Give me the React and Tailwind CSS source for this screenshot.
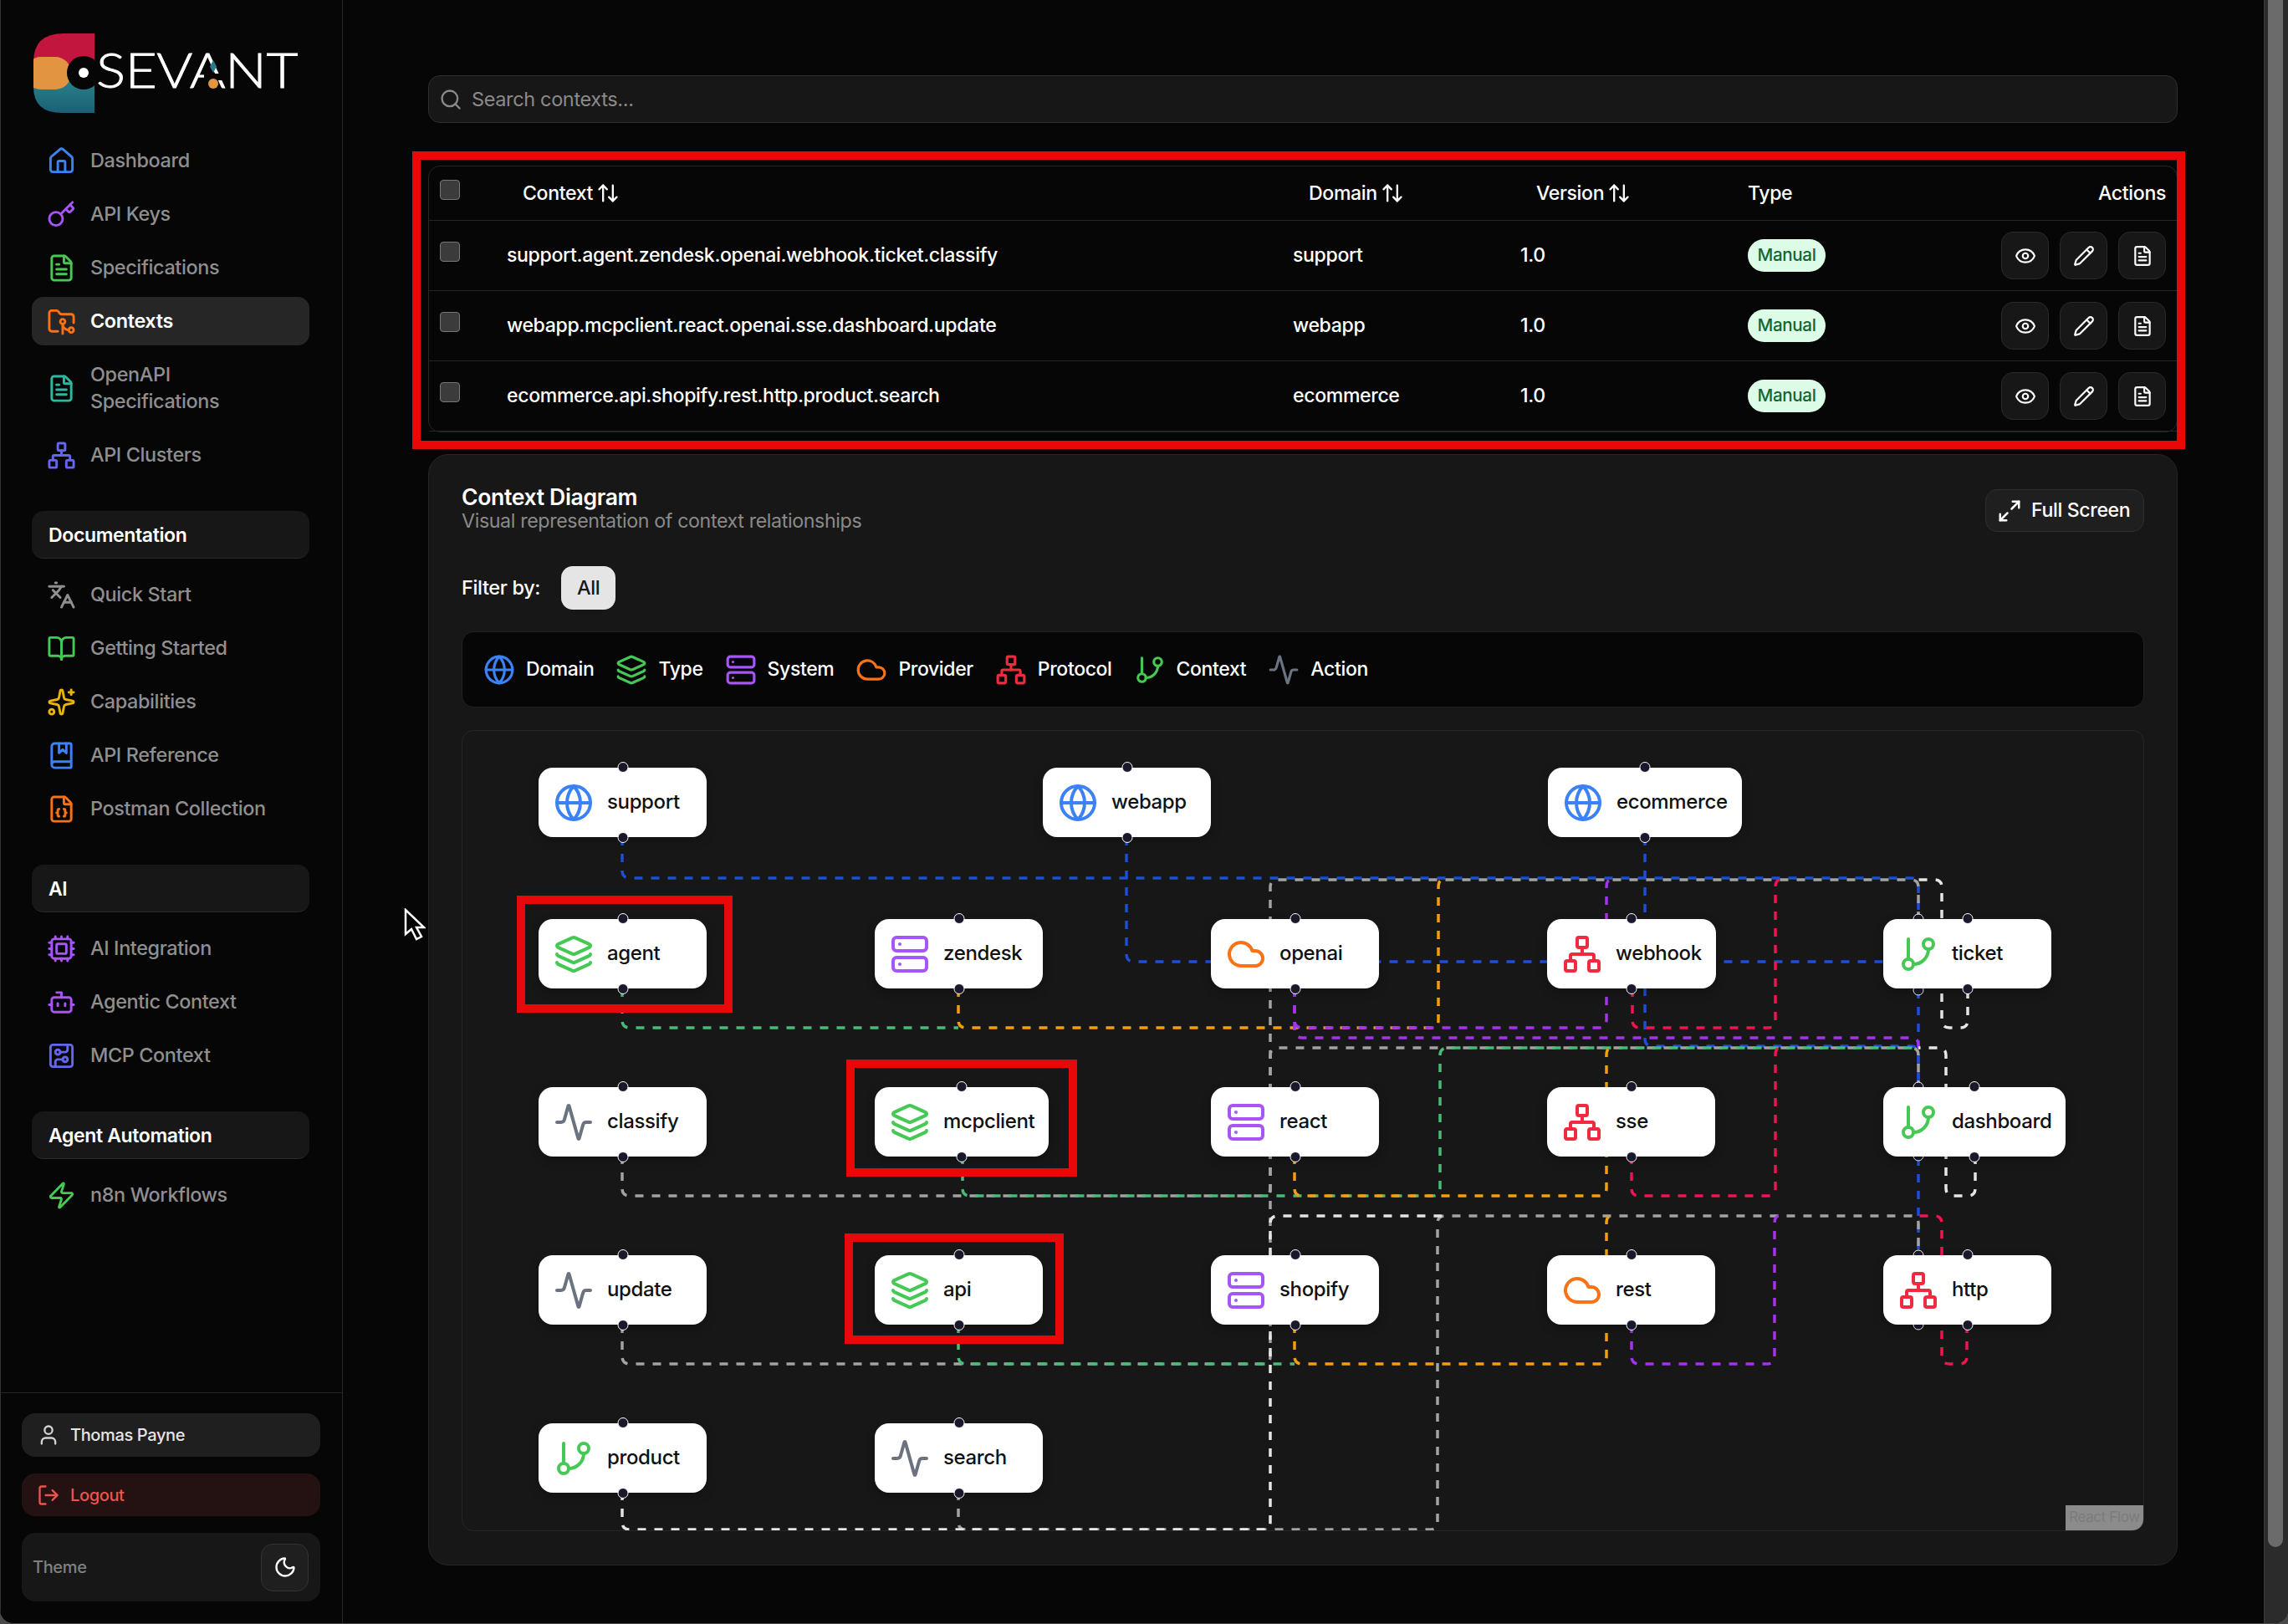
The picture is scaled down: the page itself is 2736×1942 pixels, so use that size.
import {
  Activity,
  ArrowUpDown,
  BookMarked,
  BookOpen,
  Bot,
  CircuitBoard,
  Cloud,
  Cpu,
  Eye,
  FileJson,
  FileText,
  FolderGit2,
  GitBranch,
  Globe,
  House,
  Key,
  Languages,
  Layers,
  LogOut,
  Maximize2,
  Moon,
  Network,
  Pencil,
  Search,
  Server,
  Sparkles,
  User,
  Zap,
} from 'lucide-react'

const mainNav = [
  { label: 'Dashboard', icon: House, color: 'text-[#3b82f6]' },
  { label: 'API Keys', icon: Key, color: 'text-[#a855f7]' },
  { label: 'Specifications', icon: FileText, color: 'text-[#46c954]' },
  { label: 'Contexts', icon: FolderGit2, color: 'text-[#f97316]', active: true },
  { label: 'OpenAPI Specifications', icon: FileText, color: 'text-[#2fb8a0]', wrap: true },
  { label: 'API Clusters', icon: Network, color: 'text-[#6366f1]' },
]

const sections = [
  {
    title: 'Documentation',
    items: [
      { label: 'Quick Start', icon: Languages, color: 'text-[#8f8f8f]' },
      { label: 'Getting Started', icon: BookOpen, color: 'text-[#46c954]' },
      { label: 'Capabilities', icon: Sparkles, color: 'text-[#eab308]' },
      { label: 'API Reference', icon: BookMarked, color: 'text-[#3b82f6]' },
      { label: 'Postman Collection', icon: FileJson, color: 'text-[#f97316]' },
    ],
  },
  {
    title: 'AI',
    items: [
      { label: 'AI Integration', icon: Cpu, color: 'text-[#a855f7]' },
      { label: 'Agentic Context', icon: Bot, color: 'text-[#a855f7]' },
      { label: 'MCP Context', icon: CircuitBoard, color: 'text-[#6366f1]' },
    ],
  },
  {
    title: 'Agent Automation',
    items: [{ label: 'n8n Workflows', icon: Zap, color: 'text-[#46c954]' }],
  },
]

const rows = [
  { name: 'support.agent.zendesk.openai.webhook.ticket.classify', domain: 'support' },
  { name: 'webapp.mcpclient.react.openai.sse.dashboard.update', domain: 'webapp' },
  { name: 'ecommerce.api.shopify.rest.http.product.search', domain: 'ecommerce' },
]

const kinds = {
  domain: { icon: Globe, color: 'text-[#3b82f6]', label: 'Domain' },
  type: { icon: Layers, color: 'text-[#46c954]', label: 'Type' },
  system: { icon: Server, color: 'text-[#a855f7]', label: 'System' },
  provider: { icon: Cloud, color: 'text-[#f97316]', label: 'Provider' },
  protocol: { icon: Network, color: 'text-[#ef2b3f]', label: 'Protocol' },
  context: { icon: GitBranch, color: 'text-[#46c954]', label: 'Context' },
  action: { icon: Activity, color: 'text-[#6b7280]', label: 'Action' },
}

// canvas nodes, page coordinates of the top left corner
const nodes = [
  { label: 'support', kind: 'domain', x: 643, y: 918 },
  { label: 'webapp', kind: 'domain', x: 1246, y: 918 },
  { label: 'ecommerce', kind: 'domain', x: 1850, y: 918 },
  { label: 'agent', kind: 'type', x: 643, y: 1099 },
  { label: 'zendesk', kind: 'system', x: 1045, y: 1099 },
  { label: 'openai', kind: 'provider', x: 1447, y: 1099 },
  { label: 'webhook', kind: 'protocol', x: 1849, y: 1099 },
  { label: 'ticket', kind: 'context', x: 2251, y: 1099 },
  { label: 'classify', kind: 'action', x: 643, y: 1300 },
  { label: 'mcpclient', kind: 'type', x: 1045, y: 1300 },
  { label: 'react', kind: 'system', x: 1447, y: 1300 },
  { label: 'sse', kind: 'protocol', x: 1849, y: 1300 },
  { label: 'dashboard', kind: 'context', x: 2251, y: 1300 },
  { label: 'update', kind: 'action', x: 643, y: 1501 },
  { label: 'api', kind: 'type', x: 1045, y: 1501 },
  { label: 'shopify', kind: 'system', x: 1447, y: 1501 },
  { label: 'rest', kind: 'provider', x: 1849, y: 1501 },
  { label: 'http', kind: 'protocol', x: 2251, y: 1501 },
  { label: 'product', kind: 'context', x: 643, y: 1702 },
  { label: 'search', kind: 'action', x: 1045, y: 1702 },
]

const BLUE = '#1d4ed8'
const GRAY = '#a3a3a3'
const GREEN = '#48bb78'
const ORANGE = '#f59e0b'
const PURPLE = '#a333ee'
const PINK = '#f01450'
const WHITE = '#e5e5e5'

// order matters, later edges sit on top
const edges = [
  [BLUE, [[743, 1001], [743, 1050], [2293, 1050], [2293, 1099]]],
  [BLUE, [[1346, 1001], [1346, 1150], [2260, 1150]]],
  [BLUE, [[1966, 1001], [1966, 1251], [2293, 1251], [2293, 1300]]],
  [BLUE, [[2293, 1184], [2293, 1501]]],
  [GRAY, [[743, 1382], [743, 1430], [1518, 1430], [1518, 1052], [2293, 1052], [2293, 1099]]],
  [GRAY, [[743, 1584], [743, 1631], [1518, 1631], [1518, 1253], [2293, 1253], [2293, 1300]]],
  [GRAY, [[1145, 1784], [1145, 1829], [1718, 1829], [1718, 1454], [2293, 1454], [2293, 1501]]],
  [GREEN, [[743, 1182], [743, 1229], [1145, 1229]]],
  [GREEN, [[1150, 1382], [1150, 1430], [1721, 1430], [1721, 1253], [2293, 1253]]],
  [GREEN, [[1145, 1584], [1145, 1631], [1547, 1631]]],
  [ORANGE, [[1145, 1182], [1145, 1229], [1719, 1229], [1719, 1052], [1731, 1052]]],
  [ORANGE, [[1547, 1382], [1547, 1430], [1920, 1430], [1920, 1253], [1932, 1253]]],
  [ORANGE, [[1547, 1584], [1547, 1631], [1920, 1631], [1920, 1454], [1932, 1454]]],
  [PURPLE, [[1547, 1182], [1547, 1229], [1920, 1229], [1920, 1052], [1932, 1052]]],
  [PURPLE, [[1547, 1182], [1547, 1241], [2293, 1241], [2293, 1257]]],
  [PURPLE, [[1950, 1584], [1950, 1631], [2121, 1631], [2121, 1454], [2133, 1454]]],
  [PINK, [[1951, 1182], [1951, 1229], [2122, 1229], [2122, 1052], [2134, 1052]]],
  [PINK, [[1950, 1382], [1950, 1430], [2122, 1430], [2122, 1253], [2134, 1253]]],
  [PINK, [[2351, 1584], [2351, 1631], [2321, 1631], [2321, 1454], [2293, 1454]]],
  [WHITE, [[2352, 1184], [2352, 1229], [2321, 1229], [2321, 1052], [2293, 1052]]],
  [WHITE, [[2361, 1382], [2361, 1430], [2326, 1430], [2326, 1253], [2293, 1253]]],
  [WHITE, [[743, 1784], [743, 1829], [1518, 1829], [1518, 1454], [1723, 1454]]],
]

const hiddenHandles = [1099, 1184, 1300, 1382, 1501, 1584]

const callouts = [
  { x: 618, y: 1070, w: 258, h: 140 },
  { x: 1012, y: 1266, w: 276, h: 140 },
  { x: 1010, y: 1474, w: 262, h: 132 },
]

// smoothstep style path with rounded corners
function toPath(pts, r = 9) {
  let d = `M${pts[0][0]} ${pts[0][1]}`
  for (let i = 1; i < pts.length - 1; i++) {
    const [px, py] = pts[i - 1]
    const [x, y] = pts[i]
    const [nx, ny] = pts[i + 1]
    const inLen = Math.min(r, Math.hypot(x - px, y - py) / 2)
    const outLen = Math.min(r, Math.hypot(nx - x, ny - y) / 2)
    const ax = x - Math.sign(x - px) * inLen
    const ay = y - Math.sign(y - py) * inLen
    const bx = x + Math.sign(nx - x) * outLen
    const by = y + Math.sign(ny - y) * outLen
    d += ` L${ax} ${ay} Q${x} ${y} ${bx} ${by}`
  }
  const last = pts[pts.length - 1]
  return `${d} L${last[0]} ${last[1]}`
}

function Logo() {
  return (
    <svg width="320" height="95" viewBox="40 40 320 95" className="block">
      <defs>
        <linearGradient id="logoTeal" x1="0" y1="0" x2="0" y2="1">
          <stop offset="0" stopColor="#2c8a8c" />
          <stop offset="1" stopColor="#1b5f78" />
        </linearGradient>
        <clipPath id="logoShape">
          <path d="M113 40H76Q40 40 40 74V104Q40 135 74 135H113Z" />
        </clipPath>
      </defs>
      <g clipPath="url(#logoShape)">
        <rect x="40" y="40" width="73" height="40" fill="#c2163f" />
        <rect x="40" y="85" width="73" height="50" fill="url(#logoTeal)" />
        <rect x="30" y="68" width="55" height="39" rx="19" fill="#e39440" />
      </g>
      <circle cx="100" cy="87" r="20" fill="#060606" />
      <circle cx="100" cy="87" r="6" fill="#ffffff" />
      <text
        x="115"
        y="105"
        textLength="241"
        lengthAdjust="spacingAndGlyphs"
        fill="#ffffff"
        stroke="#ffffff"
        strokeWidth="0.8"
        fontFamily="Lato, sans-serif"
        fontWeight="300"
        fontSize="58"
      >
        SEVANT
      </text>
      <rect x="244" y="88" width="22" height="8" fill="#060606" />
      <circle cx="255" cy="100" r="6" fill="#e39440" />
      <path d="M255 72L259 79.5L255 87L251 79.5Z" fill="#2a7a8c" />
    </svg>
  )
}

function NavItem({ item }) {
  const Icon = item.icon
  return (
    <div
      className={`flex items-center gap-[17px] rounded-[14px] py-[13px] pl-[18px] pr-[20px] text-[23.4px] leading-[32px] ${
        item.active ? 'bg-[#262626] font-semibold text-white' : 'font-medium text-[#8f8f8f]'
      }`}
    >
      <Icon size={35} className={`my-[-2px] shrink-0 ${item.color}`} />
      <span className={item.wrap ? 'w-[170px]' : 'whitespace-nowrap'}>{item.label}</span>
    </div>
  )
}

function Sidebar() {
  return (
    <aside className="flex w-[410px] shrink-0 flex-col border-r border-[#262626] shadow-[inset_1px_0_0_#333333]">
      <div className="h-[163px] pl-[40px] pt-[40px]">
        <Logo />
      </div>
      <nav className="flex flex-col gap-[38px] pl-[38px] pr-[39px]">
        <div className="flex flex-col gap-[6px]">
          {mainNav.map((item) => (
            <NavItem key={item.label} item={item} />
          ))}
        </div>
        {sections.map((section) => (
          <div key={section.title} className="flex flex-col">
            <div className="mb-[14px] flex h-[57px] items-center rounded-[14px] border-b border-[#2a2a2a] bg-[#171717] pl-[20px] pt-[2px] text-[23px] font-semibold text-white">
              {section.title}
            </div>
            <div className="flex flex-col gap-[6px]">
              {section.items.map((item) => (
                <NavItem key={item.label} item={item} />
              ))}
            </div>
          </div>
        ))}
      </nav>
      <div className="mt-auto flex flex-col gap-[20px] border-t border-[#262626] px-[26px] pb-[26px] pt-[24px]">
        <div className="flex h-[52px] items-center gap-[12px] rounded-[16px] bg-[#1f1f1f] pl-[18px] text-[20px] font-medium text-[#e5e5e5]">
          <User size={28} className="text-[#d4d4d4]" />
          Thomas Payne
        </div>
        <div className="flex h-[51px] items-center gap-[12px] rounded-[16px] bg-[#241212] pl-[18px] text-[20px] font-medium text-[#ef5350]">
          <LogOut size={28} />
          Logout
        </div>
        <div className="flex h-[82px] items-center justify-between rounded-[16px] bg-[#171717] pl-[13px] pr-[14px] text-[20px] font-medium text-[#808080]">
          Theme
          <div className="flex size-[57px] items-center justify-center rounded-[14px] border border-[#333333] bg-[#1f1f1f]">
            <Moon size={28} className="text-white" />
          </div>
        </div>
      </div>
    </aside>
  )
}

function Checkbox() {
  return <div className="mb-[9px] size-[24px] rounded-[4px] border border-[#777777] bg-[#3b3b3b]" />
}

function SortHeader({ label }) {
  return (
    <div className="flex items-center gap-[4px] pl-[19px]">
      {label}
      <ArrowUpDown size={28} className="text-white" />
    </div>
  )
}

function IconButton({ icon: Icon }) {
  return (
    <div className="flex size-[57px] items-center justify-center rounded-[14px] border border-[#2a2a2a] bg-[#171717]">
      <Icon size={26} className="text-white" />
    </div>
  )
}

const tableCols = 'grid grid-cols-[80px_940px_272px_272px_1fr_auto] items-center pl-[13px] pr-[13px]'

function ContextsTable() {
  return (
    <div className="relative mt-[51px] rounded-[14px] border border-[#262626] text-[23.1px] font-medium text-white">
      <div className={`${tableCols} h-[65px] border-b border-[#262626]`}>
        <Checkbox />
        <SortHeader label="Context" />
        <SortHeader label="Domain" />
        <SortHeader label="Version" />
        <div>Type</div>
        <div className="text-right">Actions</div>
      </div>
      {rows.map((row) => (
        <div
          key={row.name}
          className={`${tableCols} h-[84px] border-b border-[#262626] last:h-[83px] last:border-b-0`}
        >
          <Checkbox />
          <div>{row.name}</div>
          <div>{row.domain}</div>
          <div>1.0</div>
          <div>
            <span className="inline-flex h-[39px] w-[93px] items-center justify-center rounded-full bg-[#dcfce7] text-[20.6px] text-[#166534]">
              Manual
            </span>
          </div>
          <div className="flex gap-[13px]">
            <IconButton icon={Eye} />
            <IconButton icon={Pencil} />
            <IconButton icon={FileText} />
          </div>
        </div>
      ))}
      <div className="pointer-events-none absolute -bottom-[21px] -left-[20px] -right-[10px] -top-[18px] border-[10px] border-[#e90808]" />
    </div>
  )
}

function DiagramNode({ node }) {
  const { icon: Icon, color } = kinds[node.kind]
  return (
    <div
      className="absolute flex h-[83px] min-w-[201px] items-center gap-[16px] rounded-[17px] bg-white pl-[18px] pr-[17px] text-[24px] font-medium text-[#111111] shadow-[0_4px_12px_rgba(0,0,0,0.25)]"
      style={{ left: node.x - 552, top: node.y - 874 }}
    >
      <Icon size={48} className={`shrink-0 ${color}`} />
      <span className="pb-[2px]">{node.label}</span>
      <span className="absolute -top-[7px] left-1/2 size-[13px] -translate-x-1/2 rounded-full border border-white bg-[#1a192b]" />
      <span className="absolute -bottom-[7px] left-1/2 size-[13px] -translate-x-1/2 rounded-full border border-white bg-[#1a192b]" />
    </div>
  )
}

function Canvas() {
  return (
    <div className="relative mt-[27px] h-[958px] overflow-hidden rounded-[14px] border border-[#262626]">
      <svg width="2010" height="956" viewBox="552 874 2010 956" fill="none" className="absolute left-0 top-0">
        {edges.map(([color, pts], i) => (
          <path key={i} d={toPath(pts)} stroke={color} strokeWidth="3.5" strokeDasharray="10 10" />
        ))}
        {hiddenHandles.map((y) => (
          <circle key={y} cx="2293" cy={y} r="6" fill="#1a192b" stroke="#ffffff" strokeWidth="1" />
        ))}
      </svg>
      {nodes.map((node) => (
        <DiagramNode key={node.label} node={node} />
      ))}
      {callouts.map((box) => (
        <div
          key={box.x}
          className="pointer-events-none absolute border-[10px] border-[#e90808]"
          style={{ left: box.x - 553, top: box.y - 873, width: box.w, height: box.h }}
        />
      ))}
      <div className="absolute bottom-0 right-0 flex h-[30px] w-[93px] items-center justify-center bg-[#8b8b8b] text-[17px] text-[#7c7c7c]">
        React Flow
      </div>
    </div>
  )
}

function DiagramCard() {
  return (
    <section className="mt-[26px] rounded-[24px] border border-[#262626] bg-[#171717] px-[39px] pb-[40px] pt-[35px]">
      <div className="flex items-start justify-between">
        <div>
          <h2 className="text-[26.6px] font-semibold leading-[31px] text-white">Context Diagram</h2>
          <p className="text-[23.2px] leading-[27px] text-[#8a8a8a]">Visual representation of context relationships</p>
        </div>
        <div className="mt-[6px] flex h-[51px] w-[190px] items-center gap-[11px] rounded-[14px] border border-[#2e2e2e] bg-[#1f1f1f] pl-[13px] text-[23.1px] font-medium text-white">
          <Maximize2 size={30} />
          Full Screen
        </div>
      </div>
      <div className="mt-[40px] flex items-center gap-[25px] text-[23.5px] font-medium">
        <span className="text-white">Filter by:</span>
        <span className="flex h-[52px] w-[65px] items-center justify-center rounded-[14px] bg-[#e5e5e5] text-[#171717]">
          All
        </span>
      </div>
      <div className="mt-[26px] flex h-[91px] items-center gap-[26px] rounded-[14px] border border-[#222222] bg-[#060606] pl-[25px] text-[23px] font-medium text-white">
        {Object.values(kinds).map(({ icon: Icon, color, label }) => (
          <div key={label} className="flex items-center gap-[13px]">
            <Icon size={38} className={color} />
            {label}
          </div>
        ))}
      </div>
      <Canvas />
    </section>
  )
}

export default function App() {
  return (
    <div className="h-[1942px] w-full overflow-hidden bg-[#4a4a4a] font-[Inter,sans-serif] tracking-[-0.0225em]">
      <div className="relative flex h-[1941px] overflow-hidden rounded-b-[16px] bg-[#060606]">
        <Sidebar />
        <main className="min-w-0 flex-1 pl-[102px] pr-[103px] pt-[90px]">
          <div className="flex h-[57px] items-center gap-[11px] rounded-[14px] border border-[#2e2e2e] bg-[#171717] pl-[12px] text-[23.5px] text-[#8a8a8a]">
            <Search size={28} />
            Search contexts...
          </div>
          <ContextsTable />
          <DiagramCard />
        </main>
        <div className="w-[29px] shrink-0 border-l border-[#3a3a3a] bg-[#2b2b2b] pl-[4px]">
          <div className="h-[1850px] w-[18px] rounded-b-full bg-[#6b6b6b]" />
        </div>
        <svg width="26" height="39" viewBox="0 0 26 39" className="absolute left-[483px] top-[1086px]">
          <path d="M2 2V31L9 25L15 37L21 34L15 23H24Z" fill="#000000" stroke="#ffffff" strokeWidth="2.5" />
        </svg>
      </div>
    </div>
  )
}
